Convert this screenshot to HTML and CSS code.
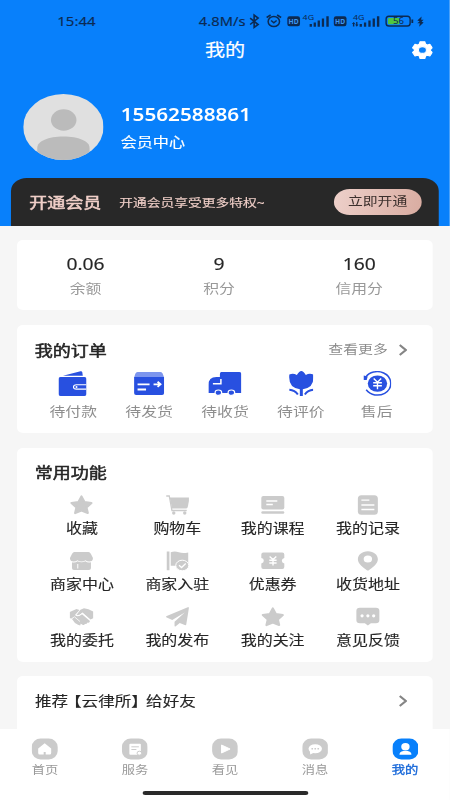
FILE: index.html
```html
<!DOCTYPE html>
<html lang="zh-CN">
<head>
<meta charset="utf-8">
<title>我的</title>
<link rel="stylesheet" href="styles.css">
</head>
<body>
<div class="app">
  <header class="top">
    <div class="status">
      <span class="time">15:44</span>
      <span class="speed">4.8M/s</span>
      <svg class="status-icons" viewBox="248 12 178 18" preserveAspectRatio="none">
        <path d="M249.500 18.200 257.500 24.500 253.500 27.500V15L257.500 18 249.500 24.500" fill="none" stroke="#0c2a52" stroke-width="1.600"/>
        <g fill="none" stroke="#0c2a52" stroke-width="1.500"><ellipse cx="273.200" cy="21.500" rx="5.700" ry="5.100"/><path d="M266 17.500 270 15M280.500 17.500 276.500 15M270.500 20.500 273.200 22.800 276 20.500"/></g>
        <rect x="286.700" y="16.200" width="12.700" height="10" rx="2.200" fill="#0c2a52"/>
        <text x="288" y="23.900" font-size="7.200" font-weight="700" textLength="10" lengthAdjust="spacingAndGlyphs" fill="#3d98f5">HD</text>
        <text x="302" y="20.300" font-size="7.500" textLength="11.500" lengthAdjust="spacingAndGlyphs" fill="#0c2a52">4G</text>
        <path d="M309 24h2.300v2.700H309zM313 22.500h2.300v4.200H313zM317 20.500h2.300v6.200H317zM321.200 18.500h2.300v8.200H321.200zM325.700 16.300h2.400v10.400H325.700z" fill="#0c2a52"/>
        <rect x="333.200" y="16.200" width="12.700" height="10" rx="2.200" fill="#0c2a52"/>
        <text x="334.500" y="23.900" font-size="7.200" font-weight="700" textLength="10" lengthAdjust="spacingAndGlyphs" fill="#3d98f5">HD</text>
        <text x="352.300" y="20.300" font-size="7.500" textLength="11.500" lengthAdjust="spacingAndGlyphs" fill="#0c2a52">4G</text>
        <path d="M351.300 24l1.700-2 1.700 2h-1v2.600h-1.400V24zM354.500 24.500h1V22h1.300v2.500h1l-1.600 2.200zM359 24h2.300v2.700H359zM363.300 22.500h2.300v4.200H363.300zM367.700 20.500h2.300v6.200H367.700zM372 18.500h2.300v8.200H372zM376.300 16.300h2.400v10.400H376.300z" fill="#0c2a52"/>
        <rect x="385.500" y="16.300" width="24" height="9.700" rx="2.800" fill="none" stroke="#0c2a52" stroke-width="1.400"/>
        <path d="M410.800 19.500h1.800v3.500h-1.800z" fill="#0c2a52"/>
        <rect x="387.300" y="18" width="11.500" height="6.300" rx="1" fill="#4fc63f"/>
        <text x="392.300" y="24.300" font-size="8.500" textLength="11" lengthAdjust="spacingAndGlyphs" fill="#0c2a52">56</text>
        <path d="M421 16.500 416.700 20.500 419 21.300 416.700 23.300H419.200L418.500 26.800 423 22.500 421 21.800 423 19.700H420.500z" fill="#0c2a52"/>
      </svg>
    </div>
    <div class="titlebar">
      <h1>我的</h1>
      <svg class="gear" viewBox="0 0 20 17" preserveAspectRatio="none"><path fill="#fff" fill-rule="evenodd" stroke="#fff" stroke-linejoin="round" d="M7.700.700h4.600l.7 2.200 1.600.8 2.500-.6 2.300 3.300-1.800 1.700v1l1.800 1.700-2.300 3.300-2.500-.6-1.600.8-.7 2.200H7.700L7 14.300l-1.600-.8-2.500.6L.6 10.800l1.800-1.700v-1L.6 6.400l2.300-3.300 2.500.6L7 2.900zM10 5.300A3.800 3.200 0 1 0 10 11.700 3.800 3.200 0 1 0 10 5.300z"/></svg>
    </div>
    <div class="profile">
      <svg class="avatar" viewBox="0 0 80 66" preserveAspectRatio="none"><defs><clipPath id="av"><ellipse cx="40" cy="33" rx="40" ry="33"/></clipPath></defs><g clip-path="url(#av)"><path fill="#e0e0e0" d="M0 0h80v66H0z"/><ellipse cx="40.300" cy="26" rx="12.700" ry="10.700" fill="#bbb"/><path fill="#bbb" d="M14 66V54C14 47 25 42.500 40 42.500S66 47 66 54v12z"/></g></svg>
      <div class="who"><div class="phone">15562588861</div><div class="center">会员中心</div></div>
    </div>
    <div class="vip">
      <strong>开通会员</strong><span class="vip-text">开通会员享受更多特权~</span><span class="vip-btn">立即开通</span>
    </div>
  </header>

  <main class="content">
    <section class="card stats">
      <div><b>0.06</b><span>余额</span></div>
      <div><b>9</b><span>积分</span></div>
      <div><b>160</b><span>信用分</span></div>
    </section>

    <section class="card orders">
      <div class="head"><h2>我的订单</h2><span class="more">查看更多</span><svg class="chev" viewBox="0 0 9 12" preserveAspectRatio="none"><path d="M1.200 1 7.300 6 1.200 11"/></svg></div>
      <div class="order-row">
        <div><svg class="o28" viewBox="0 0 28 25" preserveAspectRatio="none"><path fill="#2850e0" d="M4.500 4.700 22 .3q1.600-.2 1.800 1l.5 3.400zM2 6h24q2 0 2 2v15q0 2-2 2H2q-2 0-2-2V8q0-2 2-2z"/><path fill="none" stroke="#fff" stroke-width="1.100" d="M28 13.700H18q-3 0-3 2.200t3 2.200h10"/><circle cx="18" cy="15.900" r="1" fill="#fff"/></svg><span>待付款</span></div>
        <div><svg class="o30" viewBox="0 0 30 25" preserveAspectRatio="none"><path fill="#7c95ee" d="M3.500 1h23q1.500 0 2.200 1.800L30 6.500H0l1.300-3.700Q2 1 3.500 1z"/><path fill="#2850e0" d="M0 6h30v16q0 2-2 2H2q-2 0-2-2z"/><path fill="none" stroke="#fff" stroke-width="1.800" d="M3.500 13.300h12M3.500 18.500h8.500M19.500 13.300h7M23.500 10.700l3 2.600-3 2.600"/></svg><span>待发货</span></div>
        <div><svg class="o33" viewBox="0 0 33 25" preserveAspectRatio="none"><path fill="#2850e0" d="M13 1h18q2 0 2 2v19H0V14Q0 6 8 6h3.500V3q0-2 1.500-2z"/><path fill="none" stroke="#fff" stroke-width="1.500" d="M4.500 12.800h8V8"/><g fill="#2850e0" stroke="#fff" stroke-width="1.200"><ellipse cx="10" cy="21.700" rx="3.300" ry="2.700"/><ellipse cx="23" cy="21.700" rx="3.300" ry="2.700"/></g></svg><span>待收货</span></div>
        <div><svg class="o25" viewBox="0 0 25 25" preserveAspectRatio="none"><path fill="#2850e0" d="M12.500 0Q14.500 0 17 4q3.500-2 7.500-.5Q26 17 14 18.200V25h-3v-6.800Q-1 17 .5 3.500 4.500 2 8 4q2.500-4 4.500-4z"/><path fill="none" stroke="#2850e0" stroke-width="2" d="M.5 18.700q5.500.3 8.500 4.800M24.500 18.700q-5.500.3-8.500 4.800"/></svg><span>待评价</span></div>
        <div><svg class="o29" viewBox="0 0 29 25" preserveAspectRatio="none"><path fill="none" stroke="#2850e0" stroke-width="1.500" d="M2.500 6.300C6 .8 14-.8 20.500 2c9 4 9.600 15.500 1 20.300-6 3.200-14 2.200-18.500-3.500"/><path fill="#2850e0" d="M.5 4.500 4.500 5.500 3.500 9H.5z"/><ellipse cx="14.300" cy="12.600" rx="9.700" ry="8.200" fill="#2850e0"/><path fill="none" stroke="#fff" stroke-width="1.400" d="M10.500 7.500 14.300 11.300 18 7.500M14.300 11v7.300M10 11.800h8.700M10 14.700h8.700"/></svg><span>售后</span></div>
      </div>
    </section>

    <section class="card funcs">
      <h2>常用功能</h2>
      <div class="grid">
        <div><svg viewBox="0 0 24 20" preserveAspectRatio="none"><path d="M12 1.500 15 7 22 8 17 12.400 18.300 18 12 15.500 5.700 18 7 12.400 2 8 9 7z" stroke="#cbcbcb" stroke-width="2.200" stroke-linejoin="round"/></svg><span>收藏</span></div>
        <div><svg viewBox="0 0 24 20" preserveAspectRatio="none"><path d="M4 2.500h20l-2 9.500q-.4 1.500-2 1.500H6.300z"/><path d="M.5 1H3.500L6.200 15.500H21" fill="none" stroke="#cbcbcb" stroke-width="1.300"/><circle cx="8" cy="18" r="1.700"/><circle cx="19" cy="18" r="1.700"/></svg><span>购物车</span></div>
        <div><svg viewBox="0 0 24 20" preserveAspectRatio="none"><rect x=".5" y="1" width="23" height="13.500" rx="2"/><rect x=".5" y="16.200" width="23" height="2.600" rx="1.300"/><path d="M5.500 6h11M5.500 9.500h6.500" stroke="#fff" stroke-width="1.300"/></svg><span>我的课程</span></div>
        <div><svg viewBox="0 0 24 20" preserveAspectRatio="none"><rect x="2" y=".3" width="20" height="19.400" rx="3.500"/><path d="M5.500 5.200h8M5.500 10h13M5.500 14.500h13" stroke="#fff" stroke-width="1.300"/></svg><span>我的记录</span></div>
        <div><svg viewBox="0 0 24 20" preserveAspectRatio="none"><path d="M5 1h14q1.500 0 2.500 2L23.500 7q0 3.500-3.700 3.500-2.400 0-3.800-1.300-1.500 1.300-4 1.300T8 9.200q-1.400 1.300-3.800 1.300Q.5 10.500.5 7L2.500 3Q3.500 1 5 1z"/><path d="M2.500 11.300Q6 12 8 10.200q4 2 8 0 2 1.800 5.500 1V17q0 2-2 2h-15q-2 0-2-2z"/><path d="M8.300 13v4.500" stroke="#fff" stroke-width="1"/></svg><span>商家中心</span></div>
        <div><svg viewBox="0 0 24 20" preserveAspectRatio="none"><path d="M1 .5h2.700v18.700H1zM5 1.200q4-1.300 8 0t9.500.2v13.400H5z"/><ellipse cx="16.500" cy="14.500" rx="6.500" ry="5.300" stroke="#fff" stroke-width="1"/><path d="M13.300 14.300 15.800 16.500 20 12.500" fill="none" stroke="#fff" stroke-width="1.300"/></svg><span>商家入驻</span></div>
        <div><svg viewBox="0 0 24 20" preserveAspectRatio="none"><path d="M2.500 1.500h19q2 0 2 2V7q-2.500.5-2.500 2.700t2.500 2.700v3.600q0 2-2 2h-19q-2 0-2-2v-3.600Q3 12 3 9.700T.5 7V3.500q0-2 2-2z"/><path d="M8.800 5.500 12.200 8.500 15.500 5.500M12.200 8.500v6M8.500 9.300h7.300M8.500 12h7.300" fill="none" stroke="#fff" stroke-width="1.400"/></svg><span>优惠券</span></div>
        <div><svg viewBox="0 0 24 20" preserveAspectRatio="none"><path fill-rule="evenodd" d="M12 .3C18 .3 22 4 22 8.300 22 13 16 17 13 19.300q-1 .6-2 0C8 17 2 13 2 8.300 2 4 6 .3 12 .3zM12 4.500a4.200 3.500 0 1 0 0 7 4.200 3.500 0 1 0 0-7z"/></svg><span>收货地址</span></div>
        <div><svg viewBox="0 0 24 20" preserveAspectRatio="none"><path d="M.3 5 7 2l3 1L5.500 8q3 3 7-.8L20.500 14q-.5 2.500-2.500 1.500-.5 2-2.500 1.200-.6 1.800-2.500 1L3.500 11.500.3 11.300z"/><path d="M11 2.700 14.500 1.300 19 2.200 23.700 4.500v6.700L21 12.500 13 5.600Q10 9 7 8z"/><path d="M2.500 12 4.500 10.800 7 12.300 9 13.500 11.500 16 10.700 18.500 8.500 17.800 5.500 16z"/><path d="M7 8.500Q10 9.300 12.800 6.300L20.700 13M2.500 11.500 5 9.800 10.500 14.500" fill="none" stroke="#fff" stroke-width=".8"/></svg><span>我的委托</span></div>
        <div><svg viewBox="0 0 24 20" preserveAspectRatio="none"><path d="M23.300.5 20.500 17.500q-.2 1-1.500.5L14 16l-4 3.300q-1.200.8-1.200-.5v-4L19 5.500 6.500 13 1 10.500q-1.300-.8 0-1.500L22 .3q1.400-.4 1.300.2z"/></svg><span>我的发布</span></div>
        <div><svg viewBox="0 0 24 20" preserveAspectRatio="none"><path d="M12 1.500 15 7 22 8 17 12.400 18.300 18 12 15.500 5.700 18 7 12.400 2 8 9 7z" stroke="#cbcbcb" stroke-width="2.200" stroke-linejoin="round"/></svg><span>我的关注</span></div>
        <div><svg viewBox="0 0 24 20" preserveAspectRatio="none"><path d="M4 .8h16q3.500 0 3.500 3v9.400q0 3-3.500 3h-5L12 18.500 9 16.200H4q-3.500 0-3.500-3V3.800q0-3 3.500-3z"/><g fill="#fff"><circle cx="6.200" cy="8.800" r="1.600"/><circle cx="12" cy="8.800" r="1.600"/><circle cx="17.800" cy="8.800" r="1.600"/></g></svg><span>意见反馈</span></div>
      </div>
    </section>

    <section class="card share"><span class="share-text">推荐<i class="open">【</i>云律所<i class="close">】</i>给好友</span><svg class="chev" viewBox="0 0 9 12" preserveAspectRatio="none"><path d="M1.200 1 7.300 6 1.200 11"/></svg></section>
  </main>

  <nav class="tabs">
    <div><svg viewBox="0 0 26 22" preserveAspectRatio="none"><rect y=".5" width="26" height="21" rx="9" ry="8.500"/><path fill="#fff" d="M13 5.300 19.500 10.500V15q0 1.500-1.500 1.500h-4v-2.500h-2v2.500H8q-1.500 0-1.500-1.500v-4.500z"/></svg><span>首页</span></div>
    <div><svg viewBox="0 0 26 22" preserveAspectRatio="none"><rect y=".5" width="26" height="21" rx="9" ry="8.500"/><rect x="7.500" y="5.700" width="11.500" height="11" rx="1" fill="#fff"/><path d="M9.500 8.800h7.500M9.500 11.500h5" stroke="#cbcbcb" stroke-width="1"/><ellipse cx="17.500" cy="15.200" rx="2.300" ry="2" fill="#fff" stroke="#cbcbcb"/></svg><span>服务</span></div>
    <div><svg viewBox="0 0 26 22" preserveAspectRatio="none"><rect y=".5" width="26" height="21" rx="9" ry="8.500"/><path fill="#fff" stroke="#fff" stroke-linejoin="round" d="M9.500 7 18 11 9.500 15z"/></svg><span>看见</span></div>
    <div><svg viewBox="0 0 26 22" preserveAspectRatio="none"><rect y=".5" width="26" height="21" rx="9" ry="8.500"/><ellipse cx="13" cy="10.700" rx="6.700" ry="4.500" fill="#fff"/><path fill="#fff" d="M7.500 12.500 8 16.500 12 14.500z"/><path stroke="#cbcbcb" stroke-width="1.500" d="M9.200 10.700h1.600M12.200 10.700h1.600M15.200 10.700h1.600"/></svg><span>消息</span></div>
    <div class="on"><svg viewBox="0 0 26 22" preserveAspectRatio="none"><rect y=".5" width="26" height="21" rx="9" ry="8.500"/><ellipse cx="13" cy="8.700" rx="4.200" ry="3.700" fill="#fff"/><path fill="#fff" d="M7 16.800q0-3.300 3.800-3.800h4.400q3.800.5 3.800 3.800z"/></svg><span>我的</span></div>
  </nav>
  <div class="home"></div>
</div>
</body>
</html>
```
FILE: styles.css
```css
/* Laid out 369px wide, then widened to fill the 450px screen. */
:root { --k: 1.21875; }
* { box-sizing: border-box; margin: 0; padding: 0; }
html, body { width: 450px; height: 800px; overflow: hidden; background: #f6f6f6; }
.app {
  width: calc(450px / var(--k));
  height: 800px;
  transform: scaleX(var(--k));
  transform-origin: 0 0;
  display: flex;
  flex-direction: column;
  font-family: "Noto Sans", "Noto Sans CJK SC", sans-serif;
  color: #262626;
  white-space: nowrap;
}
svg { display: block; flex: none; }

.top {
  height: 225.5px;
  flex: none;
  background: #0880fb;
  display: flex;
  flex-direction: column;
}
.status {
  height: 30px;
  padding-top: 12px;
  display: flex;
  color: #0c2a52;
  font-size: 12.300px;
  line-height: 19px;
  -webkit-text-stroke: .15px;
}
.status-icons text { -webkit-text-stroke: 0; }
.time { width: 116px; margin-left: 47px; }
.speed { width: 40.500px; font-size: 12px; letter-spacing: .1px; }
.status-icons { width: calc(178px / var(--k)); height: 18px; }
.titlebar {
  height: 40px;
  display: grid;
  grid-template-columns: 1fr auto 1fr;
  align-items: center;
}
h1 { grid-column: 2; font-size: 16.500px; font-weight: 400; color: #fff; line-height: 24px; -webkit-text-stroke: .2px; }
.gear { width: calc(21px / var(--k)); height: 18px; justify-self: end; margin: -1px 14px 0 0; }
.profile { height: 108px; display: flex; padding: 23.500px 0 0 18.700px; }
.avatar { width: calc(80.500px / var(--k)); height: 66px; }
.who { margin-left: 14.300px; color: #fff; }
.phone { font-size: 17px; font-weight: 600; line-height: 24px; margin-top: 9px; }
.center { font-size: 13.200px; line-height: 20px; margin-top: 5px; -webkit-text-stroke: .15px; }
.vip {
  height: 47.500px;
  margin: 0 9.700px 0 9.400px;
  padding: 0 13.700px 0 14.600px;
  border-radius: 13px 13px 0 0;
  background: #282828;
  color: #f0cfc8;
  display: flex;
  align-items: center;
}
.vip strong { font-size: 14.800px; font-weight: 400; -webkit-text-stroke: .5px; }
.vip-text { font-size: 11.300px; margin-left: 14.600px; -webkit-text-stroke: .12px; }
.vip-btn {
  width: 72px;
  height: 26px;
  margin-left: auto;
  border-radius: 13px;
  background: linear-gradient(100deg, #edd0ca, #d9aca1);
  color: #3c302d;
  font-size: 12.200px;
  line-height: 26px;
  text-align: center;
}

.content { padding: 14.300px 14px 0; height: 503px; flex: none; overflow: hidden; background: #f6f6f6; }
.card { background: #fff; border-radius: 5px; margin-bottom: 14.500px; }
h2 { font-size: 14.800px; font-weight: 400; line-height: 20px; -webkit-text-stroke: .5px; }
.chev { width: calc(9px / var(--k)); height: 12px; fill: none; stroke: #858585; stroke-width: 2.200; }
.stats { height: 70.300px; display: flex; justify-content: space-between; padding: 12px 41px 0 40.500px; text-align: center; }
.stats div { display: flex; flex-direction: column; align-items: center; }
.stats div:nth-child(2) { margin-right: 1.500px; }
.stats b { font-size: 15.800px; font-weight: 400; line-height: 24px; -webkit-text-stroke: .15px; }
.stats span { font-size: 13px; line-height: 20px; color: #999; margin-top: 2px; }
.orders { height: 108.800px; padding: 15px 15px 0; }
.head { display: flex; align-items: center; }
.head h2 { margin-left: -.5px; }
.more { margin-left: auto; margin-right: 8.500px; font-size: 12.200px; line-height: 20px; color: #8c8c8c; }
.head .chev { margin-right: 6.200px; }
.order-row { display: grid; grid-template-columns: repeat(5, 1fr); margin-top: 11.500px; }
.order-row div, .grid div, .tabs div { display: flex; flex-direction: column; align-items: center; }
.order-row svg { height: 25px; }
.order-row span { font-size: 13px; line-height: 20px; margin-top: 5px; color: #8e8e8e; }
.order-row .o28 { width: calc(28px / var(--k)); margin-right: 2px; }
.o30 { width: calc(30px / var(--k)); }
.o33 { width: calc(33px / var(--k)); }
.o25 { width: calc(25px / var(--k)); }
.order-row .o29 { width: calc(29px / var(--k)); margin-left: 1px; }
.funcs { height: 214px; padding: 14px 14.200px 0; }
.funcs h2 { margin-left: .3px; }
.grid { display: grid; grid-template-columns: repeat(4, 1fr); grid-auto-rows: 55.600px; margin-top: 13.500px; }
.grid svg { width: calc(24px / var(--k)); height: 20px; fill: #cbcbcb; }
.grid span { font-size: 13.100px; line-height: 20px; margin-top: 3px; -webkit-text-stroke: .12px; }
.share { height: 60px; display: flex; justify-content: space-between; padding: 15px 21.200px 0 14.700px; }
.share-text { font-size: 13.600px; line-height: 20px; -webkit-text-stroke: .12px; }
/* Half-width brackets, padded on their outer side. */
.share i { font-style: normal; font-feature-settings: "halt"; }
.open { margin-left: 4.300px; }
.close { margin-right: 5.300px; }
.share .chev { margin-top: 4px; }

.tabs { height: 62px; flex: none; background: #fff; display: grid; grid-template-columns: repeat(5, 1fr); padding-top: 9.800px; }
.tabs svg { width: calc(26px / var(--k)); height: 22px; fill: #cbcbcb; }
.tabs span { font-size: 10.900px; line-height: 16px; margin-top: 1.500px; color: #999; }
.tabs .on svg { fill: #0880fb; }
.tabs .on span { color: #1566d8; -webkit-text-stroke: .3px; }
.home { flex: 1; background: #fff; }
.home::before { content: ""; display: block; width: 136px; height: 3.500px; border-radius: 2px; background: #2a2a2a; margin: .500px auto 0; }
```
